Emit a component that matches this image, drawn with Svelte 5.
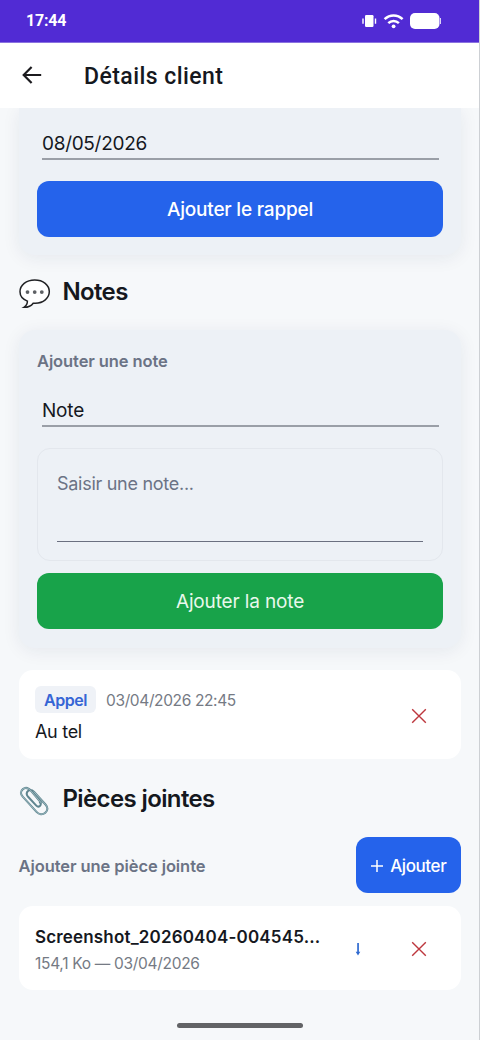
<script>
  const notes = [{ type: 'Appel', date: '03/04/2026 22:45', text: 'Au tel' }];
  const files = [{ name: 'Screenshot_20260404-004545...', size: '154,1 Ko', date: '03/04/2026' }];
</script>

{#snippet cross()}
  <svg width="16" height="16" viewBox="0 0 16 16" fill="none" stroke="#bd373e" stroke-width="1.4">
    <path d="M1.2 1.2 14.8 14.8M14.8 1.2 1.2 14.8" />
  </svg>
{/snippet}

<div class="screen">
  <div class="status">
    <span class="clock">17:44</span>
    <svg width="80" height="18" viewBox="0 0 80 18" fill="#fff">
      <rect x="4" y="3" width="8.5" height="12" rx="1.2" />
      <path d="M1.3 6.4h1.4v5.4H1.3zM13.8 6.4h1.4v5.4h-1.4z" />
      <g fill="none" stroke="#fff" stroke-width="2.5">
        <path d="M23.6 7.2C28.8 2.2 36.4 2.2 41.6 7.2" />
        <path d="M27.3 11.1C30.3 8.2 34.9 8.2 37.9 11.1" />
      </g>
      <circle cx="32.6" cy="14.3" r="1.9" />
      <rect x="49" y="1" width="29.5" height="16" rx="5" />
      <path d="M79.2 6h.8v6h-.8z" />
    </svg>
  </div>

  <header>
    <svg width="20" height="18" viewBox="0 0 20 18" fill="none" stroke="#1c1b1f" stroke-width="2.2">
      <path d="M19.2 9H2M9.6 1 1.7 9l7.9 8" />
    </svg>
    <h1>Détails client</h1>
  </header>

  <main>
    <section class="card reminder">
      <div class="field day">08/05/2026</div>
      <button class="btn blue">Ajouter le rappel</button>
    </section>

    <h2 class="title-notes">
      <svg width="32" height="30" viewBox="0 0 32 30" fill="none" stroke="#202124" stroke-width="1.5">
        <path fill="#fff" d="M8.4 22.1C3.7 20.2 1 16.9 1 12.7 1 6.1 7.2 1 15.7 1s14.6 5 14.6 11.6-6 11.6-14 11.6h-2.1c-2 2.7-5.2 4.2-9.3 4.1 2.4-1.5 3.6-3.2 3.5-6.2Z" />
        <g fill="#5d6064" stroke="none">
          <circle cx="8.5" cy="13.1" r="1.9" />
          <circle cx="15.7" cy="13.1" r="1.9" />
          <circle cx="22.8" cy="13.1" r="1.9" />
        </g>
      </svg>
      <span>Notes</span>
    </h2>

    <section class="card note-form">
      <div class="label">Ajouter une note</div>
      <div class="field kind">Note</div>
      <div class="editor"><div class="placeholder">Saisir une note...</div></div>
      <button class="btn green">Ajouter la note</button>
    </section>

    {#each notes as note}
      <article class="item note">
        <div class="body">
          <div class="meta"><span class="badge">{note.type}</span><span class="date">{note.date}</span></div>
          <div class="text">{note.text}</div>
        </div>
        <div class="delete">{@render cross()}</div>
      </article>
    {/each}

    <h2 class="title-files">
      <svg width="32" height="30" viewBox="0 0 32 30" fill="none" stroke-linecap="round" stroke-linejoin="round">
        <path stroke="#5f858f" stroke-width="2" d="M22.2 16.8 12.3 5.2C9.9 2.3 6.6.9 3.9 3.1 1 5.5 1.6 8.2 3.7 10.7L17.5 25.9c2.4 2.7 6.1 3.2 8.8.8 2.8-2.6 2.4-5.7.2-8.2L14.9 5.7C13.1 3.8 10.8 3.5 9 5.1c-1.9 1.7-1.5 3.8.1 5.7l8.2 8.8c1.1 1.2 2.5 1.3 3.6.4 1.2-1 1.1-2.4 0-3.6" />
        <path stroke="#a9c6cc" stroke-width=".8" d="M22.2 16.8 12.3 5.2C9.9 2.3 6.6.9 3.9 3.1 1 5.5 1.6 8.2 3.7 10.7L17.5 25.9c2.4 2.7 6.1 3.2 8.8.8 2.8-2.6 2.4-5.7.2-8.2L14.9 5.7" />
      </svg>
      <span>Pièces jointes</span>
    </h2>

    <div class="attach">
      <div class="label">Ajouter une pièce jointe</div>
      <button class="btn blue add">
        <svg width="12" height="12" viewBox="0 0 12 12" stroke="#fff" stroke-width="1.5"><path d="M6 0v12M0 6h12" /></svg>
        <span>Ajouter</span>
      </button>
    </div>

    {#each files as file}
      <article class="item file">
        <div class="body">
          <div class="name">{file.name}</div>
          <div class="info">{file.size} — {file.date}</div>
        </div>
        <svg class="download" width="6" height="13" viewBox="0 0 6 13" fill="#2f6ad0">
          <path d="M2.2 0h1.7v8.8h1.4L3 12.6.7 8.8h1.5z" />
        </svg>
        <div class="delete">{@render cross()}</div>
      </article>
    {/each}
  </main>

  <div class="home"></div>
</div>

<style>
  :global(body) {
    margin: 0;
  }

  .screen {
    box-sizing: border-box;
    width: 480px;
    height: 1040px;
    overflow: hidden;
    display: flex;
    flex-direction: column;
    background: #f6f8fa;
    border-right: 1px solid #cdd0d4;
    font-family: Inter, sans-serif;
    color: #15181e;
    white-space: nowrap;
  }

  svg {
    display: block;
    flex: none;
  }

  .status {
    flex: none;
    height: 43px;
    box-sizing: border-box;
    border-bottom: 1px solid #8a72e0;
    padding: 0 38.5px 0 26px;
    display: flex;
    align-items: center;
    justify-content: space-between;
    background: #512bd4;
    color: #fff;
  }

  .clock {
    font: 700 16px/20px Roboto, sans-serif;
    letter-spacing: -0.2px;
  }

  header {
    box-sizing: border-box;
    flex: none;
    height: 65px;
    padding: 0 0 1px 22px;
    display: flex;
    align-items: center;
    gap: 42px;
    background: #fff;
    position: relative;
    z-index: 1;
  }

  h1 {
    margin: 0;
    padding-top: 3px;
    font: 500 23px/28px Roboto, sans-serif;
    letter-spacing: 0.45px;
  }

  main {
    flex: 1;
    padding: 0 18px 0 18.5px;
    overflow: hidden;
  }

  .card {
    box-sizing: border-box;
    background: #edf1f6;
    border-radius: 16px;
    padding: 0 18px 0 18.5px;
    box-shadow: 0 3px 18px rgba(30, 41, 80, 0.075);
  }

  .reminder {
    height: 147px;
    padding-top: 18px;
    border-radius: 0 0 16px 16px;
  }

  .field {
    height: 32px;
    margin: 0 4.5px 0 5px;
    line-height: 35px;
    font-size: 19px;
    letter-spacing: -0.2px;
    border-bottom: 2px solid #9a9fa7;
  }

  .day {
    letter-spacing: -0.3px;
  }

  .btn {
    display: flex;
    align-items: center;
    justify-content: center;
    box-sizing: border-box;
    width: 100%;
    height: 56px;
    margin: 0;
    padding: 1px 0 0;
    border: 0;
    border-radius: 12px;
    color: #fff;
    font: 500 19px/24px Inter, sans-serif;
    letter-spacing: -0.2px;
  }

  .blue {
    background: #2563eb;
  }

  .reminder .btn {
    margin-top: 21px;
  }

  .green {
    background: #18a34a;
    font-weight: 400;
    color: #e8f8ec;
    letter-spacing: -0.14px;
    padding-top: 2px;
  }

  h2 {
    box-sizing: border-box;
    margin: 0;
    height: 75px;
    display: flex;
    align-items: center;
    gap: 12px;
    font-size: 24px;
    font-weight: 600;
    letter-spacing: -0.65px;
  }

  .title-notes span {
    padding-bottom: 3px;
  }

  .title-notes svg {
    margin-top: 2px;
  }

  .title-files svg {
    margin-top: 6px;
  }

  .note-form {
    height: 318px;
    padding-top: 20px;
  }

  .label {
    font-size: 16.5px;
    line-height: 22px;
    font-weight: 600;
    letter-spacing: -0.1px;
    color: #6b7385;
  }

  .kind {
    margin-top: 21px;
  }

  .editor {
    box-sizing: border-box;
    height: 113px;
    margin: 21px 0 12px;
    padding: 17px 19px;
    border: 1px solid #e3e7ed;
    border-radius: 13px;
  }

  .placeholder {
    height: 75px;
    line-height: 36px;
    font-size: 18px;
    letter-spacing: -0.28px;
    color: #6b7385;
    border-bottom: 1px solid #6b7080;
  }

  .item {
    display: flex;
    align-items: center;
    background: #fff;
    border-radius: 14px;
    padding: 0 34.5px 0 16.5px;
  }

  .body {
    flex: 1;
  }

  .note {
    height: 89px;
    margin-top: 22px;
  }

  .meta {
    display: flex;
    align-items: center;
    gap: 10px;
    height: 27px;
  }

  .badge {
    padding: 0 9px;
    border-radius: 6px;
    line-height: 28px;
    height: 27px;
    background: #eff2f7;
    color: #3565d5;
    font-size: 16px;
    font-weight: 600;
    letter-spacing: -0.45px;
  }

  .date,
  .info {
    font-size: 15.5px;
    letter-spacing: -0.37px;
    color: #757a84;
  }

  .date {
    padding-top: 2px;
  }

  .text {
    margin-top: 7px;
    font-size: 18px;
    line-height: 24px;
    letter-spacing: -0.3px;
  }

  .delete {
    padding-top: 2px;
  }

  .title-files {
    height: 78px;
    letter-spacing: -0.62px;
  }

  .attach {
    height: 56px;
    display: flex;
    align-items: center;
    justify-content: space-between;
  }

  .attach .label {
    padding-top: 2px;
    letter-spacing: -0.08px;
  }

  .add {
    width: 105.5px;
    gap: 7px;
    font-size: 17px;
    letter-spacing: -0.4px;
    padding: 2px 0 0 1px;
  }

  .file {
    height: 84px;
    margin-top: 13px;
  }

  .name {
    padding-top: 3px;
    font-size: 17px;
    line-height: 24px;
    font-weight: 600;
    letter-spacing: 0.17px;
  }

  .info {
    margin-top: 4px;
    line-height: 22px;
    letter-spacing: -0.3px;
  }

  .download {
    margin: 2px 50px 0 0;
  }

  .home {
    flex: none;
    width: 126px;
    height: 5px;
    margin: 0 auto 12px;
    border-radius: 3px;
    background: #626366;
  }
</style>
